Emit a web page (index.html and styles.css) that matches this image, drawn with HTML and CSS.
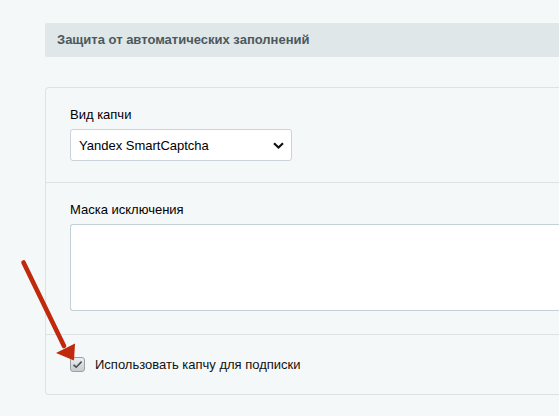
FILE: index.html
```html
<!DOCTYPE html>
<html lang="ru">
<head>
<meta charset="utf-8">
<title>Защита от автоматических заполнений</title>
<link rel="stylesheet" href="styles.css">
</head>
<body>
<div class="page">
  <div class="heading">Защита от автоматических заполнений</div>
  <div class="card">
    <div class="section">
      <label class="label" for="captcha">Вид капчи</label>
      <div class="select-wrap">
        <select id="captcha" class="select">
          <option>Yandex SmartCaptcha</option>
        </select>
        <svg class="chevron" width="11" height="7" viewBox="0 0 11 7"><path d="M1 1.2 L5.5 5.5 L10 1.2" fill="none" stroke="#111" stroke-width="2.2"/></svg>
      </div>
    </div>
    <div class="section">
      <label class="label" for="mask">Маска исключения</label>
      <textarea id="mask" class="textarea"></textarea>
    </div>
    <div class="section section-check">
      <span class="checkbox">
        <svg width="11" height="9" viewBox="0 0 11 9"><path d="M1.5 4.8 L4.2 7.2 L9.6 1.6" fill="none" stroke="#4a4f54" stroke-width="1.6"/></svg>
      </span>
      <span class="check-label">Использовать капчу для подписки</span>
    </div>
  </div>
</div>
<svg class="pointer" width="559" height="416" viewBox="0 0 559 416">
  <line x1="23.5" y1="262.5" x2="64" y2="346" stroke="#c0290b" stroke-width="4.6" stroke-linecap="round"/>
  <polygon points="56,353 75,343.5 74,360.5" fill="#c0290b"/>
</svg>
</body>
</html>
```

FILE: styles.css
```css
html, body {
  margin: 0;
  padding: 0;
  overflow: hidden;
}
body {
  background: #f5f8f9;
  font-family: "Liberation Sans", Arial, sans-serif;
  font-size: 13px;
  color: #000;
  width: 559px;
  height: 416px;
}
.page {
  padding: 23px 0 0 45px;
}
.heading {
  height: 34px;
  line-height: 34px;
  background: #e0e7e8;
  color: #4b585d;
  font-weight: bold;
  font-size: 13px;
  padding-left: 12px;
  border-radius: 2px 0 0 2px;
}
.card {
  margin-top: 30px;
  border: 1px solid #dbe3e6;
  border-right: none;
  border-radius: 4px 0 0 4px;
}
.section {
  padding: 19px 0 21px 24px;
  border-top: 1px solid #dbe3e6;
  display: flex;
  flex-direction: column;
  align-items: flex-start;
}
.section:first-child {
  border-top: none;
}
.label {
  line-height: 15px;
  margin-bottom: 7px;
}
.select-wrap {
  position: relative;
  width: 222px;
  height: 32px;
}
.select {
  appearance: none;
  -webkit-appearance: none;
  width: 222px;
  height: 32px;
  box-sizing: border-box;
  border: 1px solid #c9d3d9;
  border-radius: 3px;
  background: #fff;
  font-family: "Liberation Sans", Arial, sans-serif;
  font-size: 13px;
  color: #000;
  padding: 0 0 0 8px;
  margin: 0;
}
.chevron {
  position: absolute;
  right: 8px;
  top: 13px;
  pointer-events: none;
}
.textarea {
  align-self: stretch;
  height: 87px;
  box-sizing: border-box;
  border: 1px solid #c3d0d7;
  border-right: none;
  border-radius: 3px 0 0 3px;
  background: #fff;
  margin: 0;
  resize: none;
  font-family: "Liberation Sans", Arial, sans-serif;
}
.section:nth-child(2) {
  padding-bottom: 23px;
}
.section-check {
  flex-direction: row;
  align-items: center;
  padding-top: 22px;
  padding-bottom: 22px;
}
.checkbox {
  width: 15px;
  height: 15px;
  box-sizing: border-box;
  border: 1px solid #9aa2a8;
  border-radius: 3px;
  background: linear-gradient(#eceef0, #c6cbcf);
  display: flex;
  align-items: center;
  justify-content: center;
}
.check-label {
  margin-left: 10px;
  line-height: 15px;
  color: #111;
}
.pointer {
  position: absolute;
  left: 0;
  top: 0;
  pointer-events: none;
}
```
